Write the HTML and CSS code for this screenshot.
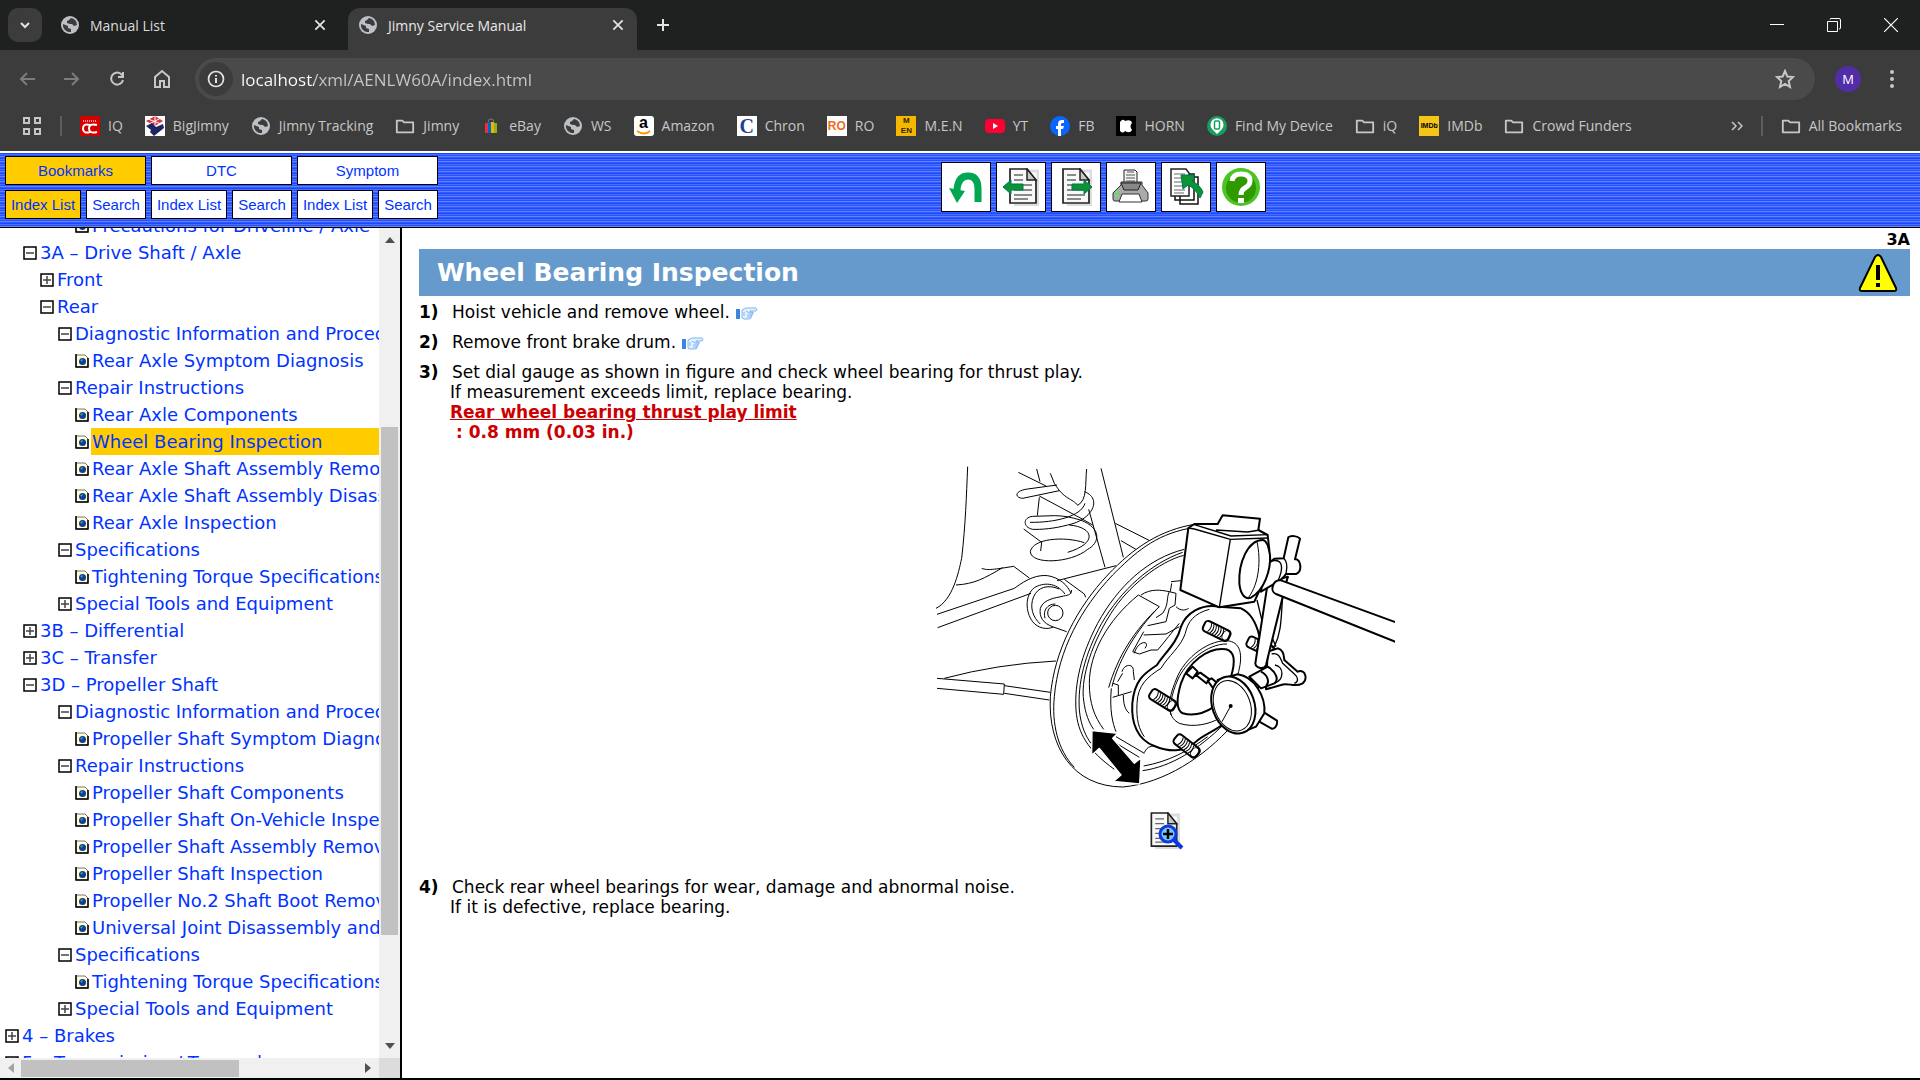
FILE: index.html
```html
<!DOCTYPE html>
<html lang="en">
<head>
  <meta charset="UTF-8" />
  <title>Jimny Service Manual</title>
  <link rel="stylesheet" href="styles.css">
</head>
<body>

<!-- Shared shapes -->
<svg class="defs" aria-hidden="true">
  <symbol id="globe" viewBox="0 0 20 20">
    <circle cx="10" cy="10" r="9" fill="#bdc1c6" />
    <path d="M11 3 L9 5 L7 6 V8 L10 9 L12 9 L14 11 L17 10 A7 7 0 0 0 11 3 Z M3 9 L8 11 L8 13 L11 14 L11 17 A7 7 0 0 1 3 9 Z" fill="#3c3c3c" />
  </symbol>
  <symbol id="folder" viewBox="0 0 22 20">
    <path d="M2 4 H8 L10 6 H20 V17 H2 Z" fill="none" stroke="#c7c7c7" stroke-width="2" stroke-linejoin="round" />
  </symbol>
  <symbol id="close" viewBox="0 0 12 12">
    <path d="M2 2 L10 10 M10 2 L2 10" stroke="#e3e3e3" stroke-width="1.500" />
  </symbol>
  <symbol id="minus" viewBox="0 0 14 14">
    <rect x="1" y="1" width="12" height="12" fill="#fff" stroke="#000" stroke-width="1.5" />
    <path d="M3 7 H11" stroke="#444" stroke-width="1.5" />
  </symbol>
  <symbol id="plus" viewBox="0 0 14 14">
    <rect x="1" y="1" width="12" height="12" fill="#fff" stroke="#000" stroke-width="1.5" />
    <path d="M3 7 H11 M7 3 V11" stroke="#444" stroke-width="1.5" />
  </symbol>
  <symbol id="leaf" viewBox="0 0 14 14">
    <path d="M1 1 H10 L13 4 V13 H1 Z" fill="#ffffd8" stroke="#777" />
    <path d="M1 0 V13 H13 V4" fill="none" stroke="#000" stroke-width="1.5" />
    <circle cx="7.5" cy="7.500" r="3.500" fill="#123a9c" />
    <path d="M5 6 L8 5 L7 8 Z" fill="#3fae6b" />
  </symbol>
  <symbol id="hand" viewBox="0 0 24 16">
    <rect x="1" y="4" width="4" height="10" fill="#3a86e0" />
    <path d="M7 5 L11 3 H21 Q23 4 21 6 H15 V7 H18 V9 H17 V11 H16 V13 L14 14 H9 L7 13 Z" fill="#e4f0fd" stroke="#7db5ef" />
    <path d="M11 6 L14 8 H18 M12 10 H17 M12 12 H16 M9 7 V11" fill="none" stroke="#7db5ef" />
  </symbol>
  <symbol id="page" viewBox="0 0 30 38">
    <path d="M3 3 H29 V37 H5" fill="none" stroke="#ddd" stroke-width="3" />
    <path d="M1 1 H18 L27 12 V35 H1 Z" fill="#f8f8f8" stroke="#222" stroke-width="1.700" />
    <path d="M18 1 V12 H27 Z" fill="#c8c8c8" stroke="#222" stroke-width="1.500" />
    <path d="M5 7 H14 M5 12 H14 M5 17 H23 M5 22 H23 M5 27 H23 M5 31 H19" stroke="#666" stroke-width="1.300" />
  </symbol>
</svg>

<!-- Tab strip -->
<header class="browser">
  <div class="tabstrip">
    <button class="tab-search" aria-label="Search tabs"><svg width="12" height="12" viewBox="0 0 12 12"><path d="M2 4 L6 8 L10 4" fill="none" stroke="#e3e3e3" stroke-width="2" /></svg></button>
    <div class="tab">
      <svg class="ico"><use href="#globe" /></svg>
      <span>Manual List</span>
      <button aria-label="Close tab"><svg width="14" height="14"><use href="#close" /></svg></button>
    </div>
    <div class="tab active">
      <svg class="ico"><use href="#globe" /></svg>
      <span>Jimny Service Manual</span>
      <button aria-label="Close tab"><svg width="14" height="14"><use href="#close" /></svg></button>
    </div>
    <button class="new-tab" aria-label="New tab"><svg width="16" height="16" viewBox="0 0 16 16"><path d="M8 2 V14 M2 8 H14" stroke="#e3e3e3" stroke-width="2" /></svg></button>
    <div class="window-buttons">
      <button aria-label="Minimize"><svg width="14" height="14" viewBox="0 0 14 14"><path d="M0 6.500 H14" stroke="#fff" /></svg></button>
      <button aria-label="Restore"><svg width="14" height="14" viewBox="0 0 14 14"><path d="M.5 3.500 H10.500 V13.500 H.5 Z M3 1.500 Q3 .5 4 .5 H12 Q13.500 .5 13.500 2 V10 Q13.500 11 12 11" fill="none" stroke="#fff" /></svg></button>
      <button aria-label="Close"><svg width="14" height="14" viewBox="0 0 14 14"><path d="M0 0 L14 14 M14 0 L0 14" stroke="#fff" stroke-width="1.200" /></svg></button>
    </div>
  </div>

  <!-- Navigation -->
  <div class="navbar">
    <button class="nav dim" aria-label="Back"><svg width="18" height="18" viewBox="0 0 18 18"><path d="M17 9 H3 M9 3 L3 9 L9 15" /></svg></button>
    <button class="nav dim" aria-label="Forward"><svg width="18" height="18" viewBox="0 0 18 18"><path d="M1 9 H15 M9 3 L15 9 L9 15" /></svg></button>
    <button class="nav" aria-label="Reload"><svg width="18" height="18" viewBox="0 0 18 18"><path d="M15 10 A6 6 0 1 1 13 4 L15 6 M15 2 V7 H10" /></svg></button>
    <button class="nav" aria-label="Home"><svg width="18" height="20" viewBox="0 0 18 20"><path d="M2 18 V8 L9 2 L16 8 V18 H11 V12 H7 V18 Z" /></svg></button>
    <div class="address">
      <span class="info"><svg width="18" height="18" viewBox="0 0 18 18"><circle cx="9" cy="9" r="7.500" fill="none" stroke="#e3e3e3" stroke-width="1.700" /><path d="M9 8 V13 M9 5 V6.500" stroke="#e3e3e3" stroke-width="2" /></svg></span>
      <input type="text" aria-label="Address" value="localhost/xml/AENLW60A/index.html">
      <button class="nav" aria-label="Bookmark this page"><svg width="20" height="20" viewBox="0 0 20 20"><path d="M10 2 L12.300 7.500 L18 8 L13.700 12 L15 18 L10 15 L5 18 L6.300 12 L2 8 L7.700 7.500 Z" /></svg></button>
    </div>
    <button class="profile">M</button>
    <button class="menu" aria-label="Menu"><svg width="6" height="20" viewBox="0 0 6 20"><circle cx="3" cy="3" r="2" /><circle cx="3" cy="10" r="2" /><circle cx="3" cy="17" r="2" /></svg></button>
  </div>

  <!-- Bookmarks -->
  <nav class="bookmarks">
    <a href="#" aria-label="Apps"><svg width="20" height="20" viewBox="0 0 20 20"><path d="M2 2 H7 V7 H2 Z M13 2 H18 V7 H13 Z M2 13 H7 V18 H2 Z M13 13 H18 V18 H13 Z" fill="none" stroke="#c7c7c7" stroke-width="2" /></svg></a>
    <span class="divider"></span>
    <a href="#"><svg class="ico" viewBox="0 0 20 20"><rect width="20" height="20" fill="#d50000" /><path d="M3 5 H17" stroke="#ff9c9c" stroke-width="2" stroke-dasharray="1 1" /><path d="M10 9 Q3 7 3 12.500 Q3 18 10 16 M17 9 Q9 7 9 12.500 Q9 18 17 16" fill="none" stroke="#fff" stroke-width="2" /></svg>IQ</a>
    <a href="#"><svg class="ico" viewBox="0 0 20 20"><rect width="20" height="20" fill="#fff" /><path d="M1 5 L10 0 L18 5 L10 10 Z" fill="#d9333f" /><path d="M3 3 L16 8 M10 0 V10 M16 2 L4 8" stroke="#fff" /><path d="M1 10 L7 7 L11 11 L18 8 L19 12 L9 20 L5 16 L6 14 Z" fill="#1d2660" /></svg>BigJimny</a>
    <a href="#"><svg class="ico"><use href="#globe" /></svg>Jimny Tracking</a>
    <a href="#"><svg class="ico"><use href="#folder" /></svg>Jimny</a>
    <a href="#"><svg class="ico" viewBox="0 0 20 20"><path d="M7 6 Q7 3 10 3 Q13 3 13 6" fill="none" stroke="#777" /><path d="M4 7 H7 V17 H4 Z" fill="#e53238" /><path d="M7 6 H10 V17 H7 Z" fill="#0064d2" /><path d="M10 6 H13 V17 H10 Z" fill="#f5af02" /><path d="M13 7 H16 V17 H13 Z" fill="#86b817" /></svg>eBay</a>
    <a href="#"><svg class="ico"><use href="#globe" /></svg>WS</a>
    <a href="#"><span class="ico tile amazon">a<svg width="16" height="5" viewBox="0 0 16 5"><path d="M1 1 Q8 6 14 1" fill="none" stroke="#f90" stroke-width="2" /></svg></span>Amazon</a>
    <a href="#"><span class="ico tile chron">C</span>Chron</a>
    <a href="#"><span class="ico tile ro">RO</span>RO</a>
    <a href="#"><span class="ico tile men">M<br>EN</span>M.E.N</a>
    <a href="#"><svg class="ico" viewBox="0 0 20 20"><rect y="3" width="20" height="14" rx="4" fill="#ff0033" /><path d="M8 7 L13 10 L8 13 Z" fill="#fff" /></svg>YT</a>
    <a href="#"><svg class="ico" viewBox="0 0 20 20"><circle cx="10" cy="10" r="10" fill="#0866ff" /><path d="M8 20 V13 H6 V10 H8 V8 Q8 4 12 4 H14 V7 H12 Q11 7 11 8.500 V10 H14 L13 13 H11 V20 Z" fill="#fff" /></svg>FB</a>
    <a href="#"><svg class="ico" viewBox="0 0 20 20"><rect width="20" height="20" fill="#000" /><path d="M4 6 Q7 2 9 5 Q15 3 16 7 Q13 10 16 14 Q14 18 9 15 Q7 18 4 15 Z" fill="#fff" /></svg>HORN</a>
    <a href="#"><svg class="ico" viewBox="0 0 20 20"><circle cx="10" cy="10" r="10" fill="#1a9e5f" /><path d="M10 18 L5 13 A6.500 6.500 0 1 1 15 13 Z" fill="#fff" /><rect x="7.500" y="5" width="5" height="8" rx="1" fill="none" stroke="#1a9e5f" stroke-width="1.500" /></svg>Find My Device</a>
    <a href="#"><svg class="ico"><use href="#folder" /></svg>iQ</a>
    <a href="#"><span class="ico tile imdb">IMDb</span>IMDb</a>
    <a href="#"><svg class="ico"><use href="#folder" /></svg>Crowd Funders</a>
    <button class="more" aria-label="More bookmarks"><svg width="12" height="12" viewBox="0 0 12 12"><path d="M1 2 L5 6 L1 10 M7 2 L11 6 L7 10" fill="none" stroke="#c7c7c7" stroke-width="1.500" /></svg></button>
    <span class="divider"></span>
    <a href="#"><svg class="ico"><use href="#folder" /></svg>All Bookmarks</a>
  </nav>
</header>

<!-- Manual header -->
<div class="manual-head">
  <div class="index-tabs">
    <div class="group">
      <button class="wide on">Bookmarks</button>
      <button class="on">Index List</button>
      <button>Search</button>
    </div>
    <div class="group">
      <button class="wide">DTC</button>
      <button>Index List</button>
      <button>Search</button>
    </div>
    <div class="group">
      <button class="wide">Symptom</button>
      <button>Index List</button>
      <button>Search</button>
    </div>
  </div>
  <div class="tools">
    <button aria-label="Return"><svg width="40" height="40" viewBox="0 0 40 40"><path d="M32 35 V22 Q32 9 22 9 Q12 9 11 23" fill="none" stroke="#00a651" stroke-width="7" /><path d="M3 21 L19 24 L11 36 Z" fill="#00a651" /></svg></button>
    <button aria-label="Previous page"><svg width="40" height="40" viewBox="0 0 40 40"><use href="#page" x="8" y="1" width="30" height="38" /><path d="M2 20 L10 13 V17 H22 V23 H10 V27 Z" fill="#0b9433" stroke="#075" /></svg></button>
    <button aria-label="Next page"><svg width="40" height="40" viewBox="0 0 40 40"><use href="#page" x="6" y="1" width="30" height="38" /><path d="M36 20 L28 13 V17 H16 V23 H28 V27 Z" fill="#0b9433" stroke="#075" /></svg></button>
    <button aria-label="Print"><svg width="40" height="40" viewBox="0 0 40 40"><path d="M13 16 V3 H24 L26 5 V16" fill="#f4f4f4" stroke="#222" /><path d="M16 5 H23 M15 8 H24 M15 11 H24 M15 14 H24" stroke="#555" /><path d="M2 32 V26 L10 18 V15 H31 V18 L37 26 V32 Q37 34 35 34 H4 Q2 34 2 32 Z" fill="#aaa" stroke="#333" /><path d="M10 16 H30 L27 23 H13 Z" fill="#888" stroke="#222" /><path d="M11 27 H28 L31 35 H8 Z" fill="#fff" stroke="#333" /><path d="M6 24 V26 M6 28 V30" stroke="#4f4" stroke-width="3" /></svg></button>
    <button aria-label="Related pages"><svg width="40" height="40" viewBox="0 0 40 40"><path d="M14 10 H32 V37 H14 Z M9 7 H28 V33 H9 Z" fill="#fff" stroke="#111" stroke-width="1.500" /><path d="M5 2 H20 L23 6 V29 H5 Z" fill="#fff" stroke="#222" stroke-width="1.500" /><path d="M8 7 H19 M8 11 H19 M8 15 H17 M8 19 H17 M8 23 H19 M8 26 H18" stroke="#666" /><path d="M15 8 H28 V12 L26 14 Q34 18 37 25 L34 31 Q30 22 22 18 L17 22 Z" fill="#0b9433" stroke="#075" /></svg></button>
    <button aria-label="Help"><svg width="40" height="40" viewBox="0 0 40 40"><circle cx="20" cy="20" r="19" fill="#4cc425" /><circle cx="20" cy="21" r="15" fill="#2f9a00" /><path d="M11 14 Q12 7 20 7 Q29 7 29 14 Q29 18 24 21 Q20 23 20 28" fill="none" stroke="#fff" stroke-width="5" /><path d="M17 31 H23 V36 H17 Z" fill="#fff" /></svg></button>
  </div>
</div>

<div class="frames">
  <!-- Contents tree -->
  <aside class="sidebar">
    <div class="tree">
      <ul>
        <li class="l4"><svg><use href="#leaf" /></svg><a href="#">Precautions for Driveline / Axle</a></li>
        <li class="l1"><svg><use href="#minus" /></svg><a href="#">3A – Drive Shaft / Axle</a></li>
        <li class="l2"><svg><use href="#plus" /></svg><a href="#">Front</a></li>
        <li class="l2"><svg><use href="#minus" /></svg><a href="#">Rear</a></li>
        <li class="l3"><svg><use href="#minus" /></svg><a href="#">Diagnostic Information and Procedures</a></li>
        <li class="l4"><svg><use href="#leaf" /></svg><a href="#">Rear Axle Symptom Diagnosis</a></li>
        <li class="l3"><svg><use href="#minus" /></svg><a href="#">Repair Instructions</a></li>
        <li class="l4"><svg><use href="#leaf" /></svg><a href="#">Rear Axle Components</a></li>
        <li class="l4"><svg><use href="#leaf" /></svg><a class="current" href="#">Wheel Bearing Inspection</a></li>
        <li class="l4"><svg><use href="#leaf" /></svg><a href="#">Rear Axle Shaft Assembly Removal and Installation</a></li>
        <li class="l4"><svg><use href="#leaf" /></svg><a href="#">Rear Axle Shaft Assembly Disassembly and Assembly</a></li>
        <li class="l4"><svg><use href="#leaf" /></svg><a href="#">Rear Axle Inspection</a></li>
        <li class="l3"><svg><use href="#minus" /></svg><a href="#">Specifications</a></li>
        <li class="l4"><svg><use href="#leaf" /></svg><a href="#">Tightening Torque Specifications</a></li>
        <li class="l3"><svg><use href="#plus" /></svg><a href="#">Special Tools and Equipment</a></li>
        <li class="l1"><svg><use href="#plus" /></svg><a href="#">3B – Differential</a></li>
        <li class="l1"><svg><use href="#plus" /></svg><a href="#">3C – Transfer</a></li>
        <li class="l1"><svg><use href="#minus" /></svg><a href="#">3D – Propeller Shaft</a></li>
        <li class="l3"><svg><use href="#minus" /></svg><a href="#">Diagnostic Information and Procedures</a></li>
        <li class="l4"><svg><use href="#leaf" /></svg><a href="#">Propeller Shaft Symptom Diagnosis</a></li>
        <li class="l3"><svg><use href="#minus" /></svg><a href="#">Repair Instructions</a></li>
        <li class="l4"><svg><use href="#leaf" /></svg><a href="#">Propeller Shaft Components</a></li>
        <li class="l4"><svg><use href="#leaf" /></svg><a href="#">Propeller Shaft On-Vehicle Inspection</a></li>
        <li class="l4"><svg><use href="#leaf" /></svg><a href="#">Propeller Shaft Assembly Removal and Installation</a></li>
        <li class="l4"><svg><use href="#leaf" /></svg><a href="#">Propeller Shaft Inspection</a></li>
        <li class="l4"><svg><use href="#leaf" /></svg><a href="#">Propeller No.2 Shaft Boot Removal and Installation</a></li>
        <li class="l4"><svg><use href="#leaf" /></svg><a href="#">Universal Joint Disassembly and Assembly</a></li>
        <li class="l3"><svg><use href="#minus" /></svg><a href="#">Specifications</a></li>
        <li class="l4"><svg><use href="#leaf" /></svg><a href="#">Tightening Torque Specifications</a></li>
        <li class="l3"><svg><use href="#plus" /></svg><a href="#">Special Tools and Equipment</a></li>
        <li class="l0"><svg><use href="#plus" /></svg><a href="#">4 – Brakes</a></li>
        <li class="l0"><svg><use href="#plus" /></svg><a href="#">5 – Transmission / Transaxle</a></li>
      </ul>
    </div>
    <div class="vbar">
      <svg width="10" height="6" viewBox="0 0 10 6"><path d="M0 6 L5 0 L10 6 Z" /></svg>
      <div class="track"><div class="thumb"></div></div>
      <svg width="10" height="6" viewBox="0 0 10 6"><path d="M0 0 L5 6 L10 0 Z" /></svg>
    </div>
    <div class="hbar">
      <svg class="off" width="6" height="10" viewBox="0 0 6 10"><path d="M6 0 L0 5 L6 10 Z" /></svg>
      <div class="track"><div class="thumb"></div></div>
      <svg width="6" height="10" viewBox="0 0 6 10"><path d="M0 0 L6 5 L0 10 Z" /></svg>
    </div>
    <div class="corner"></div>
  </aside>

  <!-- Page -->
  <main class="page">
    <div class="section">3A</div>
    <div class="title">
      <h1>Wheel Bearing Inspection</h1>
      <svg width="40" height="40" viewBox="0 0 40 40"><path d="M17 4 Q20 0 23 4 L38 35 Q39 38 36 38 H4 Q1 38 2 35 Z" fill="#ff0" stroke="#000" stroke-width="2" /><path d="M18 12 H22 V27 H18 Z M18 30 H22 V34 H18 Z" fill="#000" /></svg>
    </div>

    <ol class="steps">
      <li><b>1)</b><div><p class="lead">Hoist vehicle and remove wheel. <a href="#" aria-label="See wheel removal"><svg width="24" height="16"><use href="#hand" /></svg></a></p></div></li>
      <li><b>2)</b><div><p class="lead">Remove front brake drum. <a href="#" aria-label="See brake drum removal"><svg width="24" height="16"><use href="#hand" /></svg></a></p></div></li>
      <li><b>3)</b><div>
        <p class="lead">Set dial gauge as shown in figure and check wheel bearing for thrust play.</p>
        <p>If measurement exceeds limit, replace bearing.</p>
        <p class="limit"><u>Rear wheel bearing thrust play limit</u></p>
        <p class="limit value">: 0.8 mm (0.03 in.)</p>
      </div></li>
    </ol>

    <figure>
      <svg class="drawing" width="460" height="325" viewBox="42 45 1380 975">
        <defs>
          <g id="stud">
            <rect x="-42" y="-17" width="84" height="34" rx="10" fill="#fff" stroke-width="6" />
            <path d="M-24 -14 q8 14 0 28 M-16 -14 q8 14 0 28 M-8 -14 q8 14 0 28 M0 -14 q8 14 0 28 M8 -14 q8 14 0 28 M16 -14 q8 14 0 28" />
            <ellipse cx="30" cy="0" rx="10" ry="15" />
          </g>
        </defs>
        <!-- body and trailing arm -->
        <path d="M140 50 C136 140 134 220 122 325 C112 370 95 450 45 475 M182 355 C200 362 220 358 278 349 L325 384 M105 405 C160 402 190 385 245 353" />
        <path d="M48 493 L280 415 C320 385 350 374 380 377 C415 383 440 405 450 430 M50 533 L330 430" />
        <path d="M432 432 C405 395 365 398 340 413 C312 435 312 485 335 515 C350 535 378 540 397 531 M415 417 C380 402 350 412 338 440 C325 470 335 502 358 522" />
        <path d="M452 420 C450 438 440 434 420 440 C385 446 365 455 358 475 C354 500 365 520 397 531 L437 545 M372 505 C365 480 380 462 403 462" />
        <circle cx="403" cy="489" r="23" />
        <path d="M430 388 L490 432 L494 442 M408 392 L585 347" />
        <path d="M70 685 Q230 642 405 633 M48 685 L250 702 L248 733 L48 715 M250 707 L388 727 M250 730 L385 750" />
        <!-- spring and damper -->
        <path d="M292 67 L375 108 M355 138 L480 205 L515 225 M540 55 L607 322 M503 178 L552 352 M583 220 L686 272 M600 272 L648 300" />
        <path d="M347 57 L357 95 M355 142 L349 197 M388 70 L400 100 C430 150 455 145 470 166 C500 150 492 100 497 57" />
        <path d="M408 105 L320 117 C280 122 280 143 305 145 L415 122 M490 125 C545 145 515 210 440 225 C400 236 360 239 335 238 C305 232 305 202 335 199 L400 197 C430 197 450 202 478 210 C545 235 535 280 500 298 C450 340 330 345 328 305 C335 265 430 258 490 278" />
        <path d="M492 160 C480 200 400 218 327 217 M445 225 C520 232 530 280 440 307 M308 237 L362 277 L359 303" />
        <!-- backing plate -->
        <path d="M820 223 C720 240 640 290 560 375 C470 470 400 600 388 740 C380 890 455 1010 605 1011 C730 1000 850 920 935 825" fill="#fff" />
        <path d="M805 235 C700 255 640 310 575 375 C480 475 412 600 400 740 C392 820 410 900 460 952" />
        <path d="M790 298 C680 325 590 410 530 520 C480 615 460 700 465 780 C470 850 500 900 580 958 M785 307 C690 340 600 420 542 520 C490 615 470 700 475 780 C480 830 495 860 510 880" />
        <path d="M788 316 C715 335 620 410 570 490 C500 600 480 700 488 750 C492 790 505 820 518 838 M652 435 C560 510 505 610 505 700 C505 760 520 800 548 838" />
        <path d="M652 435 L715 470 C640 540 590 620 563 713 M705 480 C635 555 590 640 573 710 M571 715 C565 780 575 820 585 845" />
        <path d="M665 962 C750 950 830 900 910 822 M668 948 C740 935 800 905 860 860 M578 875 L655 922 M585 860 L670 910" />
        <path d="M660 435 C690 415 720 420 745 425 L765 430 L762 465 L745 475 L735 515 L680 527 M745 425 C735 445 745 460 725 490 L705 503 M750 395 L780 392 M748 425 L752 400 M765 470 C780 485 795 480 803 475" />
        <path d="M668 545 L635 605 L655 612 L690 600 L710 600 C735 570 750 550 775 520 M668 555 L735 552 L775 530 M640 610 C650 570 690 570 672 595 M603 665 C610 640 640 640 637 665 L640 690 M590 695 L605 670 M575 742 L632 725 M575 700 L592 705 V735 M607 735 C607 760 612 780 625 790" />
        <!-- hub flange -->
        <path d="M895 470 C840 460 795 490 780 530 C768 580 730 610 708 645 C670 670 640 690 634 760 C630 820 650 870 700 888 C740 905 790 910 825 875 C850 850 900 840 960 780 L1020 700 C1030 590 1015 500 960 475 Z" fill="#fff" stroke-width="6" />
        <path d="M865 478 C820 490 800 515 793 550 C780 590 740 620 720 655 C680 680 650 705 648 760 C645 810 655 840 670 860 M670 908 C680 885 695 890 700 888" />
        <path d="M925 573 C870 565 790 620 765 690 C740 750 735 800 775 820 C820 835 870 820 895 805 L945 690 C970 620 960 580 925 573 Z" fill="#fff" />
        <path d="M915 598 C860 590 800 640 780 700 C765 750 765 780 785 790 C820 800 850 790 880 770 L930 680 C945 630 940 605 915 598 Z" fill="#fff" stroke-width="6" />
        <path d="M918 582 C860 580 790 640 770 690 C750 735 745 775 750 795" />
        <!-- gauge plunger -->
        <path d="M795 670 L815 650 L830 665 L815 685 Z M825 675 L838 668 L866 688 L856 700 Z M860 692 L872 685 L895 705 L880 720 Z" fill="#fff" stroke-width="6" />
        <use href="#stud" transform="translate(887 543) rotate(26)" />
        <use href="#stud" transform="translate(1018 590) rotate(26)" />
        <use href="#stud" transform="translate(725 750) rotate(32)" />
        <use href="#stud" transform="translate(797 888) rotate(38)" />
        <!-- stand, rods and dial gauge -->
        <g transform="translate(690 0)" stroke-width="6">
          <path d="M345 440 C345 520 360 560 375 590 M412 380 C380 440 405 520 370 590 M318 450 L335 520" fill="none" stroke-width="4" />
          <path d="M350 605 L380 595 C400 600 398 620 400 630 L440 665 C465 655 470 690 455 700 C430 715 410 695 390 705 L345 718 Z" fill="#fff" />
          <path d="M362 612 C385 605 390 630 395 640 L430 672 C440 680 445 695 430 700 M372 645 C400 650 400 690 370 700" fill="none" stroke-width="4" />
          <path d="M350 400 L313 640 C315 655 340 660 345 645 L410 380 Z" fill="#fff" />
          <path d="M398 325 L412 262 C420 255 440 258 447 266 L432 328 C450 325 455 365 435 372 L405 372 C400 380 385 395 372 400 L330 425 L340 350 L370 326 Z" fill="#fff" />
          <path d="M360 333 C395 325 400 350 380 395 M398 325 C415 340 405 365 405 372" fill="none" stroke-width="4" />
          <path d="M735 517 L390 391 C365 388 355 425 375 432 L735 576" fill="#fff" />
          <path d="M112 234 L130 222 L200 222 L215 196 L327 206 L322 240 L350 255 L355 300 L340 390 L310 455 L205 472 L88 420 Z" fill="#fff" />
          <path d="M112 234 L130 237 L238 268 L350 264 M130 224 L240 258 L350 254 M195 240 L290 246 L327 240 M238 268 L205 472" fill="none" stroke-width="4" />
          <path d="M335 270 C290 270 262 340 265 400 C268 430 280 450 300 443 C340 420 360 360 357 315 C352 285 345 270 335 270 Z" fill="#fff" />
          <path d="M318 275 C330 330 325 400 292 443" fill="none" stroke-width="3" />
          <path d="M295 680 L350 650 C375 665 385 690 370 700 L330 715 Z" fill="#fff" />
          <path d="M330 665 C350 675 357 695 345 708" fill="none" />
          <path d="M325 790 L340 788 L378 812 C380 825 372 838 362 836 L325 815 Z" fill="#fff" />
          <path d="M200 690 L260 673 C310 680 345 740 340 790 L315 830 L265 850 Z" fill="#fff" />
          <ellipse cx="247" cy="765" rx="63" ry="88" transform="rotate(-20 247 765)" fill="#fff" />
          <ellipse cx="244" cy="767" rx="54" ry="78" transform="rotate(-20 244 767)" fill="#fff" stroke-width="3" />
          <path d="M239 768 L213 815" stroke-width="3" />
          <circle cx="239" cy="768" r="6" fill="#000" stroke="none" />
        </g>
        <path d="M513 842 L590 850 L575 865 L640 940 L660 924 L656 1002 L578 994 L600 975 L535 895 L512 916 Z" fill="#000" stroke="#fff" stroke-width="4" />
      </svg>
      <figcaption><a href="#" aria-label="Enlarge figure"><svg width="34" height="38" viewBox="0 0 34 38"><use href="#page" width="30" height="37" /><circle cx="18" cy="22" r="8" fill="#7cc4ff" stroke="#0b3be0" stroke-width="3" /><path d="M24 28 L32 36" stroke="#0b3be0" stroke-width="4" /><path d="M18 17 V27 M13 22 H23" stroke="#000" stroke-width="2.500" /></svg></a></figcaption>
    </figure>

    <ol class="steps" start="4">
      <li><b>4)</b><div>
        <p class="lead">Check rear wheel bearings for wear, damage and abnormal noise.</p>
        <p>If it is defective, replace bearing.</p>
      </div></li>
    </ol>
  </main>
</div>

</body>
</html>
```
FILE: styles.css
```css
html, body {
  margin: 0;
  padding: 0;
  height: 100%;
}
body {
  display: flex;
  flex-direction: column;
  box-sizing: border-box;
  border-bottom: 2px solid #000;
  background: #fff;
  font-family: "DejaVu Sans", Verdana, sans-serif;
  overflow: hidden;
}
button {
  padding: 0;
  border: none;
  background: none;
  font: inherit;
  color: inherit;
  cursor: pointer;
}
a {
  color: inherit;
  text-decoration: none;
}
svg {
  display: block;
  flex: none;
}
.defs {
  position: absolute;
  width: 0;
  height: 0;
}
.ico {
  width: 20px;
  height: 20px;
  flex: none;
}

/* Browser frame */
.browser {
  flex: none;
  background: #3c3c3c;
  color: #c7c7c7;
  font-family: "Open Sans", "Segoe UI", sans-serif;
  font-size: 14px;
}
.tabstrip {
  display: flex;
  align-items: flex-end;
  height: 50px;
  padding-left: 8px;
  background: #1f2020;
}
.tab-search {
  display: grid;
  place-items: center;
  width: 34px;
  height: 34px;
  margin-bottom: 8px;
  border-radius: 10px;
  background: #3c3c3c;
}
.tab {
  display: flex;
  align-items: center;
  gap: 10px;
  box-sizing: border-box;
  width: 289px;
  height: 42px;
  margin-left: 8px;
  padding: 0 12px 8px 10px;
  color: #dcdcdc;
}
.tab + .tab {
  margin-left: 9px;
}
.tab span {
  flex: 1;
}
.tab.active {
  border-radius: 12px 12px 0 0;
  background: #3c3c3c;
  color: #e8e8e8;
}
.new-tab {
  margin: 0 0 17px 18px;
}
.window-buttons {
  display: flex;
  gap: 43px;
  margin: 0 22px 18px auto;
}
.navbar {
  display: flex;
  align-items: center;
  height: 42px;
  padding: 8px 25px 0 18px;
}
.nav {
  width: 20px;
  margin-right: 25px;
}
.nav path {
  fill: none;
  stroke: #c7c7c7;
  stroke-width: 2;
}
.nav.dim path {
  stroke: #7c7c7c;
}
.address {
  display: flex;
  flex: 1;
  align-items: center;
  height: 42px;
  margin: 0 20px 0 -3px;
  border-radius: 21px;
  background: #4a4a4a;
}
.address .nav {
  margin-right: 20px;
}
.info {
  display: grid;
  place-items: center;
  width: 34px;
  height: 34px;
  margin: 0 8px 0 4px;
  border-radius: 17px;
  background: #3c3c3c;
}
.address input {
  flex: 1;
  padding: 0;
  border: none;
  outline: none;
  background: linear-gradient(to right, #fff 73px, #c7c7c7 73px);
  background-clip: text;
  color: transparent;
  font: inherit;
  font-size: 17px;
}
.profile {
  width: 26px;
  height: 26px;
  border-radius: 13px;
  background: #512da8;
  color: #fff;
  font-size: 13px;
}
.menu {
  margin-left: 28px;
}
.menu circle {
  fill: #c7c7c7;
}
.bookmarks {
  display: flex;
  align-items: center;
  gap: 22px;
  height: 51px;
  padding: 0 18px 0 22px;
  white-space: nowrap;
}
.bookmarks a {
  display: flex;
  align-items: center;
  gap: 8px;
}
.divider {
  width: 2px;
  height: 20px;
  margin: 0 -4px;
  background: #5e5e5e;
}
.more {
  margin-left: auto;
}
.tile {
  box-sizing: border-box;
  background: #fff;
  color: #000;
  font-family: "Liberation Sans", Arial, sans-serif;
  line-height: 20px;
  text-align: center;
  font-weight: bold;
}
.amazon {
  border-radius: 3px;
  font-size: 16px;
  line-height: 14px;
}
.amazon svg {
  margin-left: 2px;
}
.chron {
  color: #1d3f94;
  font-family: "Liberation Serif", serif;
  font-size: 20px;
}
.ro {
  color: #f26a21;
  font-size: 12px;
}
.men {
  background: #f5b800;
  color: #332600;
  font-size: 8px;
  line-height: 10px;
}
.imdb {
  background: #f5c518;
  font-size: 7px;
}

/* Manual header */
.manual-head {
  display: grid;
  flex: none;
  grid-template-columns: 49% 1fr;
  box-sizing: border-box;
  height: 77px;
  border-top: 2px solid #fff;
  border-bottom: 1px solid #000;
  background: repeating-linear-gradient(to bottom, #1a48ff 0, #1a48ff 1px, #4a6eff 1px, #4a6eff 2px, #2752ff 2px, #2752ff 3px, #6482ff 3px, #6482ff 4px, #2f5aff 4px, #2f5aff 5px);
}
.index-tabs {
  display: flex;
  align-items: flex-start;
  gap: 5px;
  padding: 3px 5px;
}
.group {
  display: grid;
  grid-template-columns: 76px 60px;
  gap: 5px;
}
.group button {
  height: 29px;
  border: 1px solid #000;
  background: #fff;
  color: #03f;
  font-family: "Liberation Sans", Arial, sans-serif;
  font-size: 15px;
}
.group .wide {
  grid-column: 1 / 3;
}
.group .on {
  background: #fc0;
}
.tools {
  display: flex;
  gap: 5px;
  padding-top: 9px;
}
.tools button {
  display: grid;
  place-items: center;
  width: 50px;
  height: 50px;
  border: 1px solid #000;
  background: #fff;
}

/* Frames */
.frames {
  display: flex;
  flex: 1;
  min-height: 0;
}
.sidebar {
  display: grid;
  flex: none;
  grid-template-columns: 379px 21px;
  grid-template-rows: 1fr 20px;
  border-right: 2px solid #000;
}
.tree {
  min-height: 0;
  overflow: hidden;
}
/* scrolled part of the way down */
.tree ul {
  margin: -16px 0 0;
  padding: 0;
  list-style: none;
}
.tree li {
  display: flex;
  align-items: center;
  height: 27px;
  color: #03f;
  font-size: 18px;
  white-space: nowrap;
}
.tree svg {
  width: 14px;
  height: 14px;
}
.tree a {
  flex: 1;
  min-width: 0;
  margin-left: 2px;
  padding-left: 1px;
  line-height: 27px;
  overflow: hidden;
}
.tree .current {
  background: #fc0;
}
.l0 { padding-left: 5px; }
.l1 { padding-left: 23px; }
.l2 { padding-left: 40px; }
.l3 { padding-left: 58px; }
.l4 { padding-left: 75px; }

.vbar, .hbar {
  display: flex;
  align-items: center;
  background: #f0f0f0;
}
.vbar svg, .hbar svg {
  margin: 9px 0;
  fill: #505050;
}
.hbar svg {
  margin: 0 8px;
}
.hbar .off {
  margin-right: 7px;
  fill: #a3a3a3;
}
.vbar {
  flex-direction: column;
}
.track {
  flex: 1;
}
.vbar .track {
  width: 17px;
}
.vbar .thumb {
  height: 65%;
  margin-top: 175px;
}
.thumb {
  background: #c1c1c1;
}
.hbar .thumb {
  width: 65%;
  height: 17px;
}
.corner {
  background: #dcdcdc;
}

/* Page */
.page {
  flex: 1;
  padding: 2px 10px 0 17px;
  font-size: 17px;
  line-height: 20px;
}
.section {
  text-align: right;
  font-size: 16px;
  font-weight: bold;
  line-height: 19px;
}
.title {
  display: flex;
  align-items: center;
  justify-content: space-between;
  height: 47px;
  padding: 0 12px 0 18px;
  background: #69c;
  color: #fff;
}
.title h1 {
  margin: 0;
  font-size: 25px;
}
.steps {
  margin: 0;
  padding: 6px 0 0;
  list-style: none;
}
.steps li {
  display: flex;
  margin-bottom: 10px;
}
.steps b {
  width: 31px;
}
.steps p {
  margin: 0;
}
.steps .lead {
  text-indent: 2px;
}
.steps a {
  display: inline-block;
  height: 16px;
  vertical-align: -3px;
  text-indent: 0;
}
.limit {
  color: #c00;
  font-weight: bold;
}
.steps .value {
  padding-left: 6px;
}
figure {
  display: flex;
  flex-direction: column;
  align-items: center;
  gap: 22px;
  margin: 23px 0 21px;
}
figcaption {
  padding-left: 4px;
}
.drawing {
  fill: none;
  stroke: #000;
  stroke-width: 3;
  stroke-linejoin: round;
}
```
